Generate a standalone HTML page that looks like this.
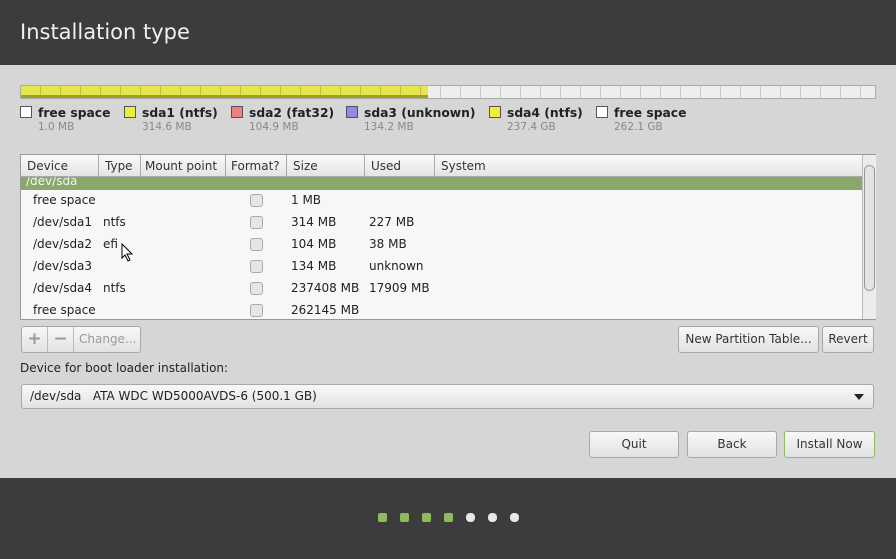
<!DOCTYPE html>
<html><head><style>
*{box-sizing:border-box;margin:0;padding:0}
body{width:896px;height:559px;background:#d6d6d6;font-family:"DejaVu Sans","Liberation Sans",sans-serif;font-size:12px;color:#333;position:relative;overflow:hidden}
.a{position:absolute;white-space:nowrap}
.hdr{left:0;top:0;width:896px;height:65px;background:#3c3c3c;color:#f0f0f0;font-size:21px;padding:20px 0 0 20px}
.ftr{left:0;top:478px;width:896px;height:81px;background:#3c3c3c}
.dot{width:9px;height:9px;border-radius:2px;top:513px}
.g{background:#8dbb60}.w{background:#e8e8e8}
.bar{left:20px;top:85px;width:856px;height:14px;border:1px solid #aaa;background:repeating-linear-gradient(90deg,#eee 0 19px,#c8c8c8 19px 20px)}
.yel{position:absolute;left:0;top:0;width:407px;height:12px;background:repeating-linear-gradient(90deg,#e6e650 0 19px,#c0c040 19px 20px);border-bottom:3px solid #a0a020}
.lg{top:106px;font-weight:bold;font-size:12.3px;color:#222}
.lg i{display:inline-block;width:12px;height:12px;border:1px solid #555;vertical-align:-1px;margin-right:6px}
.sub{top:121px;font-size:10.5px;color:#888}
.tbl{left:20px;top:154px;width:856px;height:166px;border:1px solid #999;background:#f7f7f7}
.th{position:absolute;top:0;height:22px;border-right:1px solid #aaa;background:linear-gradient(#fafafa,#e4e4e4);padding:4px 6px;font-size:12px;border-bottom:1px solid #aaa;white-space:nowrap;overflow:hidden}
.gr{position:absolute;left:0;top:22px;width:841px;height:13px;background:#8aa86a;color:#f4f4f4;font-size:12px;line-height:8px;padding-left:5px;overflow:hidden}
.r{position:absolute;font-size:12px;color:#222;white-space:nowrap}
.cb{position:absolute;width:13px;height:13px;border:1px solid #aaa;border-radius:3px;background:#e6e6e6;left:229px}
.btn{background:linear-gradient(#f8f8f8,#e2e2e2);border:1px solid #a8a8a8;border-radius:3px;text-align:center;font-size:12px;color:#333;line-height:25px;white-space:nowrap}
</style></head><body>
<div class="a hdr">Installation type</div>
<div class="a bar"><div class="yel"></div></div>
<div class="a lg" style="left:20px"><i style="background:#fff"></i>free space</div><div class="a sub" style="left:38px">1.0 MB</div>
<div class="a lg" style="left:124px"><i style="background:#eded3c"></i>sda1 (ntfs)</div><div class="a sub" style="left:142px">314.6 MB</div>
<div class="a lg" style="left:231px"><i style="background:#ee8080"></i>sda2 (fat32)</div><div class="a sub" style="left:249px">104.9 MB</div>
<div class="a lg" style="left:346px"><i style="background:#8c8ce8"></i>sda3 (unknown)</div><div class="a sub" style="left:364px">134.2 MB</div>
<div class="a lg" style="left:489px"><i style="background:#eded3c"></i>sda4 (ntfs)</div><div class="a sub" style="left:507px">237.4 GB</div>
<div class="a lg" style="left:596px"><i style="background:#fff"></i>free space</div><div class="a sub" style="left:614px">262.1 GB</div>
<div class="a tbl">
<div class="th" style="left:0;width:78px">Device</div>
<div class="th" style="left:78px;width:42px">Type</div>
<div class="th" style="left:120px;width:85px;padding-left:4px">Mount point</div>
<div class="th" style="left:205px;width:61px;padding-left:5px">Format?</div>
<div class="th" style="left:266px;width:78px">Size</div>
<div class="th" style="left:344px;width:70px">Used</div>
<div class="th" style="left:414px;width:427px;border-right:none">System</div>
<div class="gr">/dev/sda</div>
<div style="position:absolute;left:841px;top:0;width:14px;height:164px;border-left:1px solid #bbb;background:#ececec"><div style="position:absolute;left:1px;top:10px;width:11px;height:126px;border:1px solid #999;border-radius:6px;background:#e4e4e4"></div></div>
<div class="r" style="left:12px;top:38px">free space</div><div class="cb" style="top:39px"></div><div class="r" style="left:270px;top:38px">1 MB</div>
<div class="r" style="left:12px;top:60px">/dev/sda1</div><div class="r" style="left:82px;top:60px">ntfs</div><div class="cb" style="top:61px"></div><div class="r" style="left:270px;top:60px">314 MB</div><div class="r" style="left:348px;top:60px">227 MB</div>
<div class="r" style="left:12px;top:82px">/dev/sda2</div><div class="r" style="left:82px;top:82px">efi</div><div class="cb" style="top:83px"></div><div class="r" style="left:270px;top:82px">104 MB</div><div class="r" style="left:348px;top:82px">38 MB</div>
<div class="r" style="left:12px;top:104px">/dev/sda3</div><div class="cb" style="top:105px"></div><div class="r" style="left:270px;top:104px">134 MB</div><div class="r" style="left:348px;top:104px">unknown</div>
<div class="r" style="left:12px;top:126px">/dev/sda4</div><div class="r" style="left:82px;top:126px">ntfs</div><div class="cb" style="top:127px"></div><div class="r" style="left:270px;top:126px">237408 MB</div><div class="r" style="left:348px;top:126px">17909 MB</div>
<div class="r" style="left:12px;top:148px">free space</div><div class="cb" style="top:149px"></div><div class="r" style="left:270px;top:148px">262145 MB</div>
<svg style="position:absolute;left:100px;top:88px" width="14" height="20"><path d="M1 1 L1 15 L4 12 L7 18 L9 17 L6 11 L11 11 Z" fill="#fff" stroke="#000" stroke-width="1"/></svg>
</div>
<div class="a btn" style="left:21px;top:326px;width:120px;height:27px;color:#999;text-align:left;display:flex"><span style="width:26px;border-right:1px solid #bbb;text-align:center;font-size:17px;font-weight:bold">+</span><span style="width:26px;border-right:1px solid #bbb;text-align:center;font-size:17px;font-weight:bold">−</span><span style="padding-left:5px">Change...</span></div>
<div class="a btn" style="left:678px;top:326px;width:141px;height:27px">New Partition Table...</div>
<div class="a btn" style="left:822px;top:326px;width:52px;height:27px">Revert</div>
<div class="a" style="left:20px;top:361px;font-size:12px;color:#222">Device for boot loader installation:</div>
<div class="a btn" style="left:21px;top:384px;width:853px;height:25px;text-align:left;padding-left:8px;line-height:23px;color:#222">/dev/sda&nbsp;&nbsp;&nbsp;ATA WDC WD5000AVDS-6 (500.1 GB)<span style="position:absolute;right:9px;top:9px;border-left:5px solid transparent;border-right:5px solid transparent;border-top:6px solid #222"></span></div>
<div class="a btn" style="left:589px;top:431px;width:90px;height:27px">Quit</div>
<div class="a btn" style="left:687px;top:431px;width:90px;height:27px">Back</div>
<div class="a btn" style="left:784px;top:431px;width:91px;height:27px;border:1px solid #8dbb60">Install Now</div>
<div class="a ftr"></div>
<div class="a dot g" style="left:378px"></div><div class="a dot g" style="left:400px"></div><div class="a dot g" style="left:422px"></div><div class="a dot g" style="left:444px"></div><div class="a dot w" style="left:466px;border-radius:4px"></div><div class="a dot w" style="left:488px;border-radius:4px"></div><div class="a dot w" style="left:510px;border-radius:4px"></div>
</body></html>
